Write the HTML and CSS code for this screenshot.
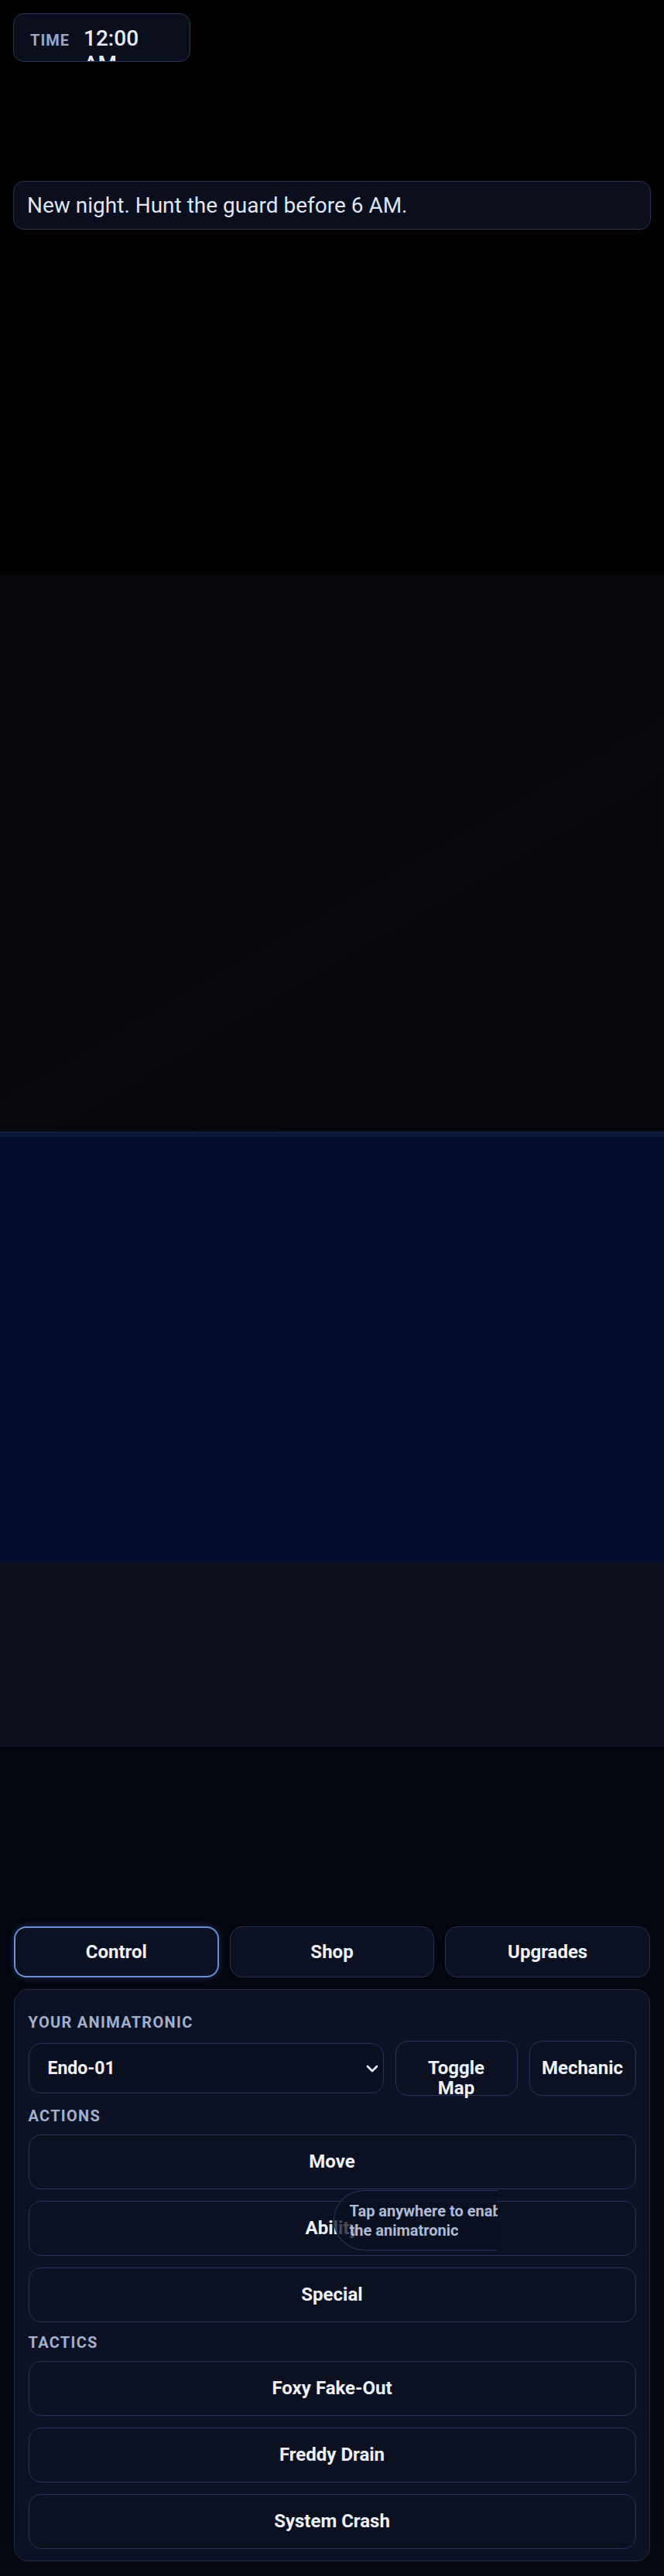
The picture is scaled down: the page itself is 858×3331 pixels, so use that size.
FILE: index.html
```html
<!DOCTYPE html>
<html lang="en">
<head>
    <meta charset="UTF-8">
    <meta name="viewport" content="width=device-width, initial-scale=1.0">
    <title>Night Shift - Animatronic</title>
    <link rel="stylesheet" href="styles.css">
</head>
<body>
<div class="game">
    <header class="hud">
        <div class="clock">
            <span class="clock-label">Time</span>
            <span class="clock-value">12:00 AM</span>
        </div>
        <div class="log">New night. Hunt the guard before 6 AM.</div>
    </header>

    <section class="office"></section>
    <section class="map"></section>
    <section class="cams"></section>

    <section class="controls">
        <nav class="tabs">
            <button class="tab active">Control</button>
            <button class="tab">Shop</button>
            <button class="tab">Upgrades</button>
        </nav>

        <div class="panel">
            <h3 class="label">Your Animatronic</h3>
            <div class="picker">
                <div class="select-wrap">
                    <select class="select">
                        <option>Endo-01</option>
                    </select>
                    <svg class="chevron" width="16" height="10" viewBox="0 0 16 10">
                        <path d="M2 2 L8 8 L14 2" fill="none" stroke="#eef1fb" stroke-width="2.6" stroke-linecap="round" stroke-linejoin="round"/>
                    </svg>
                </div>
                <button class="btn btn-map"><span class="wrap">Toggle Map</span></button>
                <button class="btn btn-mech">Mechanic</button>
            </div>

            <h3 class="label">Actions</h3>
            <div class="stack">
                <button class="btn">Move</button>
                <button class="btn">Ability</button>
                <button class="btn">Special</button>
                <div class="hint">
                    <span>Tap anywhere to enable</span>
                    <span>the animatronic</span>
                </div>
            </div>

            <h3 class="label">Tactics</h3>
            <div class="stack">
                <button class="btn">Foxy Fake-Out</button>
                <button class="btn">Freddy Drain</button>
                <button class="btn">System Crash</button>
            </div>
        </div>
    </section>
</div>
</body>
</html>
```

FILE: styles.css
```css
body {
    margin: 0;
    background: #03050f;
    font-family: Roboto, "Liberation Sans", sans-serif;
    color: #eef1fb;
}

button, select {
    font-family: inherit;
    color: inherit;
}

/* top hud */
.hud {
    height: 743px;
    box-sizing: border-box;
    padding: 17px;
    background: #020203;
}

.clock {
    display: flex;
    align-items: baseline;
    gap: 18px;
    width: 229px;
    height: 63px;
    box-sizing: border-box;
    padding: 15px 21px 0;
    border: 1.5px solid #2b3557;
    border-radius: 14px;
    background: #0b0f1d;
    overflow: hidden;
}

.clock-label {
    font-size: 20px;
    font-weight: 700;
    letter-spacing: 1px;
    text-transform: uppercase;
    color: #9ea7c6;
}

.clock-value {
    width: min-content;
    font-size: 28px;
    font-weight: 500;
    line-height: 33px;
    color: #e8ecfb;
}

.log {
    margin-top: 154px;
    height: 63px;
    box-sizing: border-box;
    display: flex;
    align-items: center;
    padding: 0 17px;
    border: 1.5px solid #28335a;
    border-radius: 14px;
    background: #0b0f1d;
    font-size: 28px;
    color: #dfe5f6;
}

/* play areas */
.office {
    height: 720px;
    background: linear-gradient(150deg, #06070c 55%, #07080d 56%, #06070c);
}

.map {
    height: 558px;
    box-sizing: border-box;
    border-top: 7px solid #0c1a3d;
    background: #040d2b;
}

.cams {
    height: 238px;
    background: #0c0f1d;
}

/* bottom controls */
.controls {
    padding: 232px 18px 18px;
    background: linear-gradient(180deg, #03050f, #060810);
}

.tabs {
    display: grid;
    grid-template-columns: repeat(3, 1fr);
    gap: 14px;
    margin-bottom: 15px;
}

.tab {
    height: 66px;
    border: 1.5px solid #263052;
    border-radius: 16px;
    background: #0b1121;
    font-size: 24px;
    font-weight: 700;
    cursor: pointer;
}

.tab.active {
    border: 2px solid #6d8ed3;
    box-shadow: 0 0 10px rgba(80, 120, 220, 0.35);
}

.panel {
    border: 1.5px solid #212c4b;
    border-radius: 18px;
    background: #0c1223;
    padding: 31px 17.5px 15px;
}

.label {
    margin: 15px 0 12px;
    font-size: 20px;
    line-height: 23px;
    font-weight: 700;
    letter-spacing: 1.3px;
    text-transform: uppercase;
    color: #a5afcb;
}

.label:first-child {
    margin-top: 0;
}

.picker {
    display: flex;
    align-items: center;
    gap: 15px;
}

.select-wrap {
    flex: 1;
    position: relative;
}

.select {
    width: 100%;
    height: 65px;
    appearance: none;
    border: 1.5px solid #27315a;
    border-radius: 16px;
    background: #0b1020;
    padding: 0 24px;
    font-size: 23px;
    font-weight: 700;
}

.chevron {
    position: absolute;
    right: 7px;
    top: 28px;
    pointer-events: none;
}

.btn {
    height: 71px;
    box-sizing: border-box;
    display: flex;
    justify-content: center;
    align-items: flex-start;
    padding: 21px 8px 0;
    border: 1.5px solid #27325a;
    border-radius: 16px;
    background: #0b1121;
    font-size: 24px;
    line-height: 26px;
    font-weight: 700;
    cursor: pointer;
}

.btn-map {
    flex: none;
    width: 158px;
}

.btn-mech {
    flex: none;
    width: 138px;
}

.wrap {
    width: min-content;
}

.stack {
    position: relative;
    display: flex;
    flex-direction: column;
    gap: 15px;
}

/* first-run hint bubble */
.hint {
    position: absolute;
    top: 72px;
    left: 394px;
    width: 212px;
    height: 78px;
    box-sizing: border-box;
    padding: 14px 0 0 20px;
    border: 1.5px solid #2a3660;
    border-right: 0;
    border-radius: 39px 0 0 39px;
    background: rgba(11, 16, 32, 0.75);
    overflow: hidden;
    white-space: nowrap;
    font-size: 20px;
    line-height: 25px;
    font-weight: 700;
    color: #b0bad5;
}

.hint span {
    display: block;
}
```
